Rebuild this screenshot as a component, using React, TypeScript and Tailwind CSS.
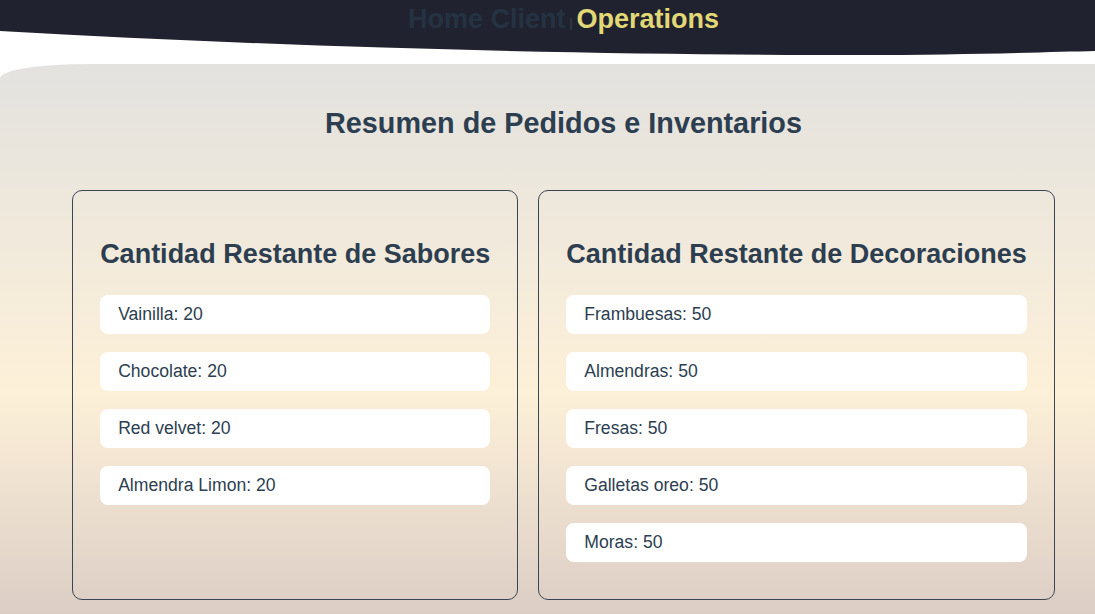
import React from "react";

const sabores = [
  { name: "Vainilla", qty: 20 },
  { name: "Chocolate", qty: 20 },
  { name: "Red velvet", qty: 20 },
  { name: "Almendra Limon", qty: 20 },
];

const decoraciones = [
  { name: "Frambuesas", qty: 50 },
  { name: "Almendras", qty: 50 },
  { name: "Fresas", qty: 50 },
  { name: "Galletas oreo", qty: 50 },
  { name: "Moras", qty: 50 },
];

interface cardProps {
  title: string;
  items: { name: string; qty: number }[];
}

function StockCard({ title, items }: cardProps) {
  return (
    <section className="border border-[#3a4654] rounded-[10px] px-[27px] pt-[48px] pb-[37px]">
      <h2 className="text-[27px] font-bold text-[#2c3e50] leading-[31px] whitespace-nowrap">
        {title}
      </h2>
      <ul className="mt-[25px] flex flex-col gap-[18px]">
        {items.map((item, index) => (
          <li
            key={index}
            className="bg-white rounded-lg h-[39px] flex items-center px-[18px] text-[1.1rem] text-[#2c3e50]"
          >
            {item.name}: {item.qty}
          </li>
        ))}
      </ul>
    </section>
  );
}

export default function App() {
  return (
    <div
      className="min-h-[614px] bg-white flex flex-col"
      style={{ fontFamily: '"Liberation Sans", Arial, sans-serif' }}
    >
      <header className="relative h-[64px]">
        <svg
          className="absolute inset-0 w-full h-full"
          viewBox="0 0 1095 64"
          preserveAspectRatio="none"
        >
          <path
            d="M0,0 H1095 V51 C1050,52 960,55 860,55 C600,55 300,48 0,31 Z"
            fill="#20232f"
          />
        </svg>
        <nav className="relative flex justify-center items-center h-[39px] pl-8 font-bold text-[27px]">
          <span className="text-[#243242]">Home Client</span>
          <span className="text-[#3a4654] text-[12px] font-normal mx-[4px] mt-[6px]">|</span>
          <span className="text-[#e2d876]">Operations</span>
        </nav>
      </header>

      <main className="flex-1 rounded-tl-[90px_14px] bg-gradient-to-b from-[#e3e2df] via-[#fdf0d8] via-60% to-[#dccdc5] pl-8 pt-[43px] pb-[15px]">
        <h1 className="text-center text-[1.8rem] font-bold text-[#2c3e50] leading-[33px]">
          Resumen de Pedidos e Inventarios
        </h1>
        <div className="mt-[50px] flex justify-center gap-5">
          <StockCard title="Cantidad Restante de Sabores" items={sabores} />
          <StockCard title="Cantidad Restante de Decoraciones" items={decoraciones} />
        </div>
      </main>
    </div>
  );
}
